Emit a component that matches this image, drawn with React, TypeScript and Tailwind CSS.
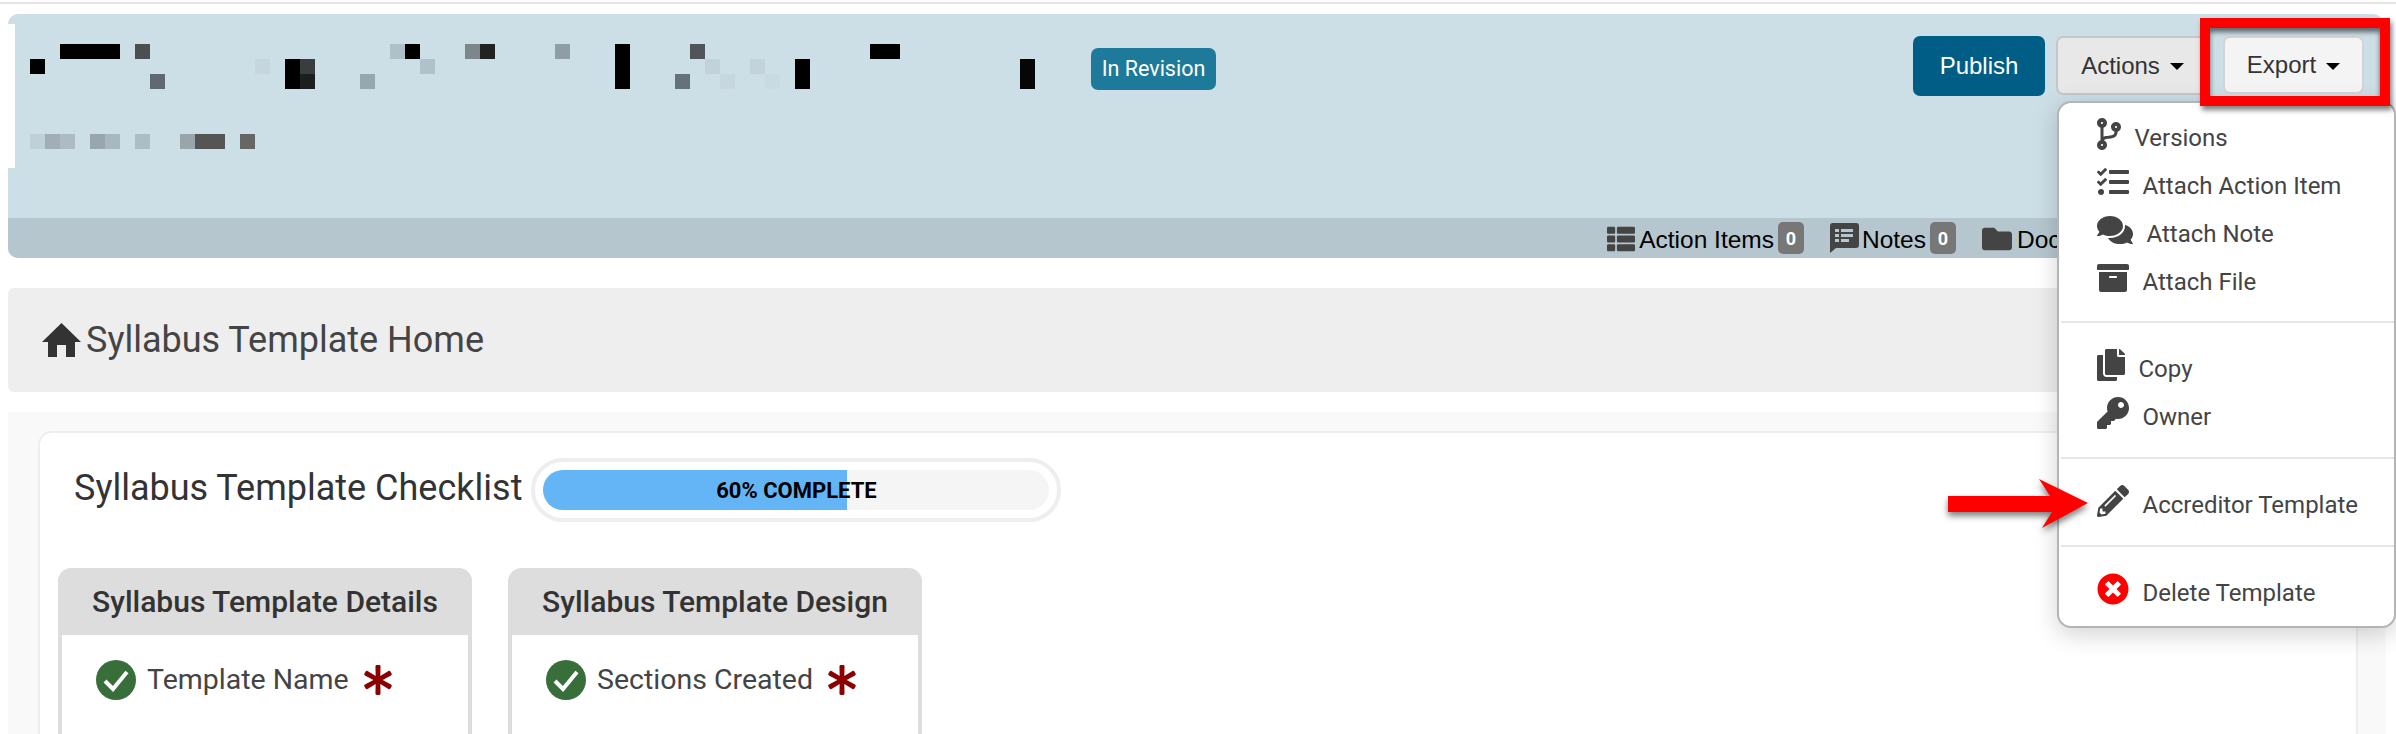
import {
  FaArchive,
  FaAsterisk,
  FaCodeBranch,
  FaComments,
  FaCopy,
  FaFolder,
  FaKey,
  FaPencilAlt,
  FaTasks,
  FaThList,
  FaTimesCircle,
} from "react-icons/fa";
import type { ReactNode } from "react";

// pixelated (redacted) title blocks: x, y, w, h, fill - relative to the svg
const blocks: [number, number, number, number, string][] = [
  [30, 0, 60, 15, "#000"],
  [105, 0, 15, 15, "#4a4f52"],
  [360, 0, 15, 15, "#afc0c8"],
  [375, 0, 15, 15, "#000"],
  [435, 0, 15, 15, "#7c868b"],
  [450, 0, 15, 15, "#222"],
  [525, 0, 15, 15, "#8f9ea6"],
  [585, 0, 15, 45, "#000"],
  [660, 0, 15, 15, "#4f5558"],
  [840, 0, 30, 15, "#000"],
  [0, 15, 15, 15, "#000"],
  [225, 15, 15, 15, "#c6d6de"],
  [255, 15, 15, 30, "#000"],
  [270, 15, 15, 15, "#3a3d3f"],
  [390, 15, 15, 15, "#b0c1c9"],
  [675, 15, 15, 15, "#c2d2da"],
  [720, 15, 15, 15, "#c3d3db"],
  [765, 15, 15, 30, "#000"],
  [990, 15, 15, 30, "#060606"],
  [120, 30, 15, 15, "#5e6a70"],
  [270, 30, 15, 15, "#1c1f20"],
  [330, 30, 15, 15, "#97a7af"],
  [645, 30, 15, 15, "#66727a"],
  [690, 30, 15, 15, "#c7d7df"],
  [735, 30, 15, 15, "#c9dae2"],
  [0, 90, 15, 15, "#c0d0d8"],
  [15, 90, 15, 15, "#a2aeb6"],
  [30, 90, 15, 15, "#adbcc4"],
  [60, 90, 15, 15, "#9aa6ad"],
  [75, 90, 15, 15, "#a8b8c0"],
  [105, 90, 15, 15, "#acbdc5"],
  [150, 90, 15, 15, "#9aa5ab"],
  [165, 90, 30, 15, "#555"],
  [210, 90, 15, 15, "#666"],
];

function Caret() {
  return <span className="ml-[10px] mt-[2px] h-0 w-0 border-x-[7px] border-t-[7px] border-x-transparent border-t-black" />;
}

function CountBadge({ children }: { children: ReactNode }) {
  return (
    <span className="ml-[4px] flex h-[32px] w-[26px] items-center justify-center rounded-[5px] bg-[#777] font-['Roboto',sans-serif] text-[18px] font-bold text-white">
      {children}
    </span>
  );
}

function NotesIcon() {
  return (
    <svg width="30" height="30" viewBox="0 0 30 30" className="shrink-0">
      <path d="M3 0h24a3 3 0 0 1 3 3v19a3 3 0 0 1-3 3H7l-6 5V3a3 3 0 0 1 2-3z" fill="#444" />
      <path d="M6 6h4v3H6zM12 6h12v3H12zM6 11h4v3H6zM12 11h12v3H12zM6 16h4v3H6zM12 16h8v3h-8z" fill="#b5c6ce" />
    </svg>
  );
}

function HomeIcon() {
  return (
    <svg width="39" height="34" viewBox="0 0 39 34" className="shrink-0">
      <path d="M19.5 0L39 19h-6v15h-9V22h-9v12H6V19H0z" fill="#333" />
    </svg>
  );
}

function CheckIcon() {
  return (
    <svg width="40" height="40" viewBox="0 0 40 40" className="shrink-0">
      <circle cx="20" cy="20" r="20" fill="#376e3a" />
      <path d="M9 21l8 8L31 12" fill="none" stroke="#fff" strokeWidth="4" />
    </svg>
  );
}

function MenuItem({ icon, label }: { icon: ReactNode; label: string }) {
  return (
    <div className="flex h-[48px] items-center gap-[13.5px] pl-[38px]">
      {icon}
      <span className="pt-[8px]">{label}</span>
    </div>
  );
}

function MenuDivider({ top, bottom }: { top: string; bottom: string }) {
  return <div className={`ml-[2px] h-[2px] bg-[#e5e5e5] ${top} ${bottom}`} />;
}

function ChecklistCard({ title, item }: { title: string; item: string }) {
  return (
    <div className="h-[220px] w-[414px] rounded-t-[14px] border-x-4 border-[#ddd]">
      <div className="-mx-1 flex h-[67px] items-center justify-center rounded-t-[14px] bg-[#ddd] text-[30px] font-medium text-[#333]">
        {title}
      </div>
      <div className="flex items-center pl-[34px] pt-[24px] text-[28.5px] text-[#444]">
        <CheckIcon />
        <span className="ml-[11px]">{item}</span>
        <FaAsterisk size={30} className="ml-[14px] text-[#8b0000]" />
      </div>
    </div>
  );
}

export default function App() {
  return (
    <div className="relative h-[734px] w-full overflow-hidden bg-white pt-[2px] font-['Roboto',sans-serif]">
      <div className="h-[2px] bg-[#e4e4e4]" />

      {/* record header */}
      <div className="relative ml-[8px] mr-[13px] mt-[10px] overflow-hidden rounded-[10px] bg-[#ccdee6]">
        <div className="absolute left-0 top-[10px] h-[144px] w-[7px] bg-white" />
        <div className="flex h-[204px] items-start justify-between pl-[22px] pr-[19px]">
          <div className="flex items-start gap-[56px] pt-[30px]">
            <svg width="1005" height="105" viewBox="0 0 1005 105" className="shrink-0">
              {blocks.map(([x, y, w, h, fill], i) => (
                <rect key={i} x={x} y={y} width={w} height={h} fill={fill} />
              ))}
            </svg>
            <span className="mt-[4px] flex h-[42px] w-[125px] items-center justify-center rounded-[7px] bg-[#1e7a9a] text-[21.5px] text-white">
              In Revision
            </span>
          </div>
          <div className="flex pt-[22px] font-['Liberation_Sans',sans-serif] text-[24px]">
            <button className="h-[60px] w-[132px] rounded-[7px] bg-[#005d85] text-white">Publish</button>
            <button className="ml-[11px] flex h-[59px] w-[153px] items-center justify-center rounded-[7px] border-2 border-[#c4c8ca] bg-[#e8e8e8] text-[#333]">
              Actions
              <Caret />
            </button>
            <button className="ml-[14px] flex h-[58px] w-[141px] items-center justify-center rounded-[7px] border-2 border-[#d4d4d4] bg-[#f4f4f4] text-[#333]">
              Export
              <Caret />
            </button>
          </div>
        </div>
        <div className="flex h-[40px] items-center justify-end bg-[#b5c6ce] pr-[326px] font-['Liberation_Sans',sans-serif] text-[24.5px] text-black">
          <FaThList size={28} className="mt-[2px] text-[#444]" />
          <span className="ml-[4px] pt-[4px]">Action Items</span>
          <CountBadge>0</CountBadge>
          <span className="ml-[25px]">
            <NotesIcon />
          </span>
          <span className="ml-[3px] pt-[4px]">Notes</span>
          <CountBadge>0</CountBadge>
          <FaFolder size={30} className="ml-[26px] mt-[2px] text-[#444]" />
          {/* the rest of this label sits under the open menu */}
          <span className="ml-[5px] w-[40px] overflow-hidden whitespace-nowrap pt-[4px]">Documents</span>
        </div>
      </div>

      {/* page title */}
      <div className="ml-[8px] mr-[13px] mt-[30px] flex h-[104px] items-center gap-[5px] rounded-[6px] bg-[#eee] pl-[34px] text-[36px] text-[#444]">
        <HomeIcon />
        Syllabus Template Home
      </div>

      {/* checklist panel */}
      <div className="ml-[8px] mr-[10px] mt-[20px] h-[322px] bg-[#f9f9f9] pl-[30px] pr-[28px] pt-[19px]">
        <div className="h-[400px] rounded-[14px] border-2 border-[#eee] bg-white pl-[18px] pt-[25px]">
          <div className="flex items-center pl-[16px]">
            <span className="mb-[4px] text-[36px] text-[#333]">Syllabus Template Checklist</span>
            <div className="ml-[9px] h-[64px] w-[530px] rounded-full border-4 border-[#eee] bg-white p-[8px]">
              <div className="relative h-full w-full overflow-hidden rounded-full bg-[#f5f5f5]">
                <div className="h-full w-[60%] bg-[#64b5f6]" />
                <span className="absolute inset-0 flex items-center justify-center text-[22px] font-bold text-black">
                  60% COMPLETE
                </span>
              </div>
            </div>
          </div>
          <div className="mt-[46px] flex gap-[36px]">
            <ChecklistCard title="Syllabus Template Details" item="Template Name" />
            <ChecklistCard title="Syllabus Template Design" item="Sections Created" />
          </div>
        </div>
      </div>

      {/* dropdown menu */}
      <div className="absolute left-[2057px] top-[101px] h-[527px] w-[339px] rounded-[14px] border-2 border-[#b4b4b4] bg-white pt-[7px] text-[24px] text-[#444] shadow-[0_6px_24px_rgba(0,0,0,0.18)]">
        <MenuItem icon={<FaCodeBranch size={32} className="w-[24px]" />} label="Versions" />
        <MenuItem icon={<FaTasks size={32} />} label="Attach Action Item" />
        <MenuItem icon={<FaComments size={32} className="w-[36px]" />} label="Attach Note" />
        <MenuItem icon={<FaArchive size={32} />} label="Attach File" />
        <MenuDivider top="mt-[19px]" bottom="mb-[18px]" />
        <MenuItem icon={<FaCopy size={32} className="w-[28px]" />} label="Copy" />
        <MenuItem icon={<FaKey size={32} />} label="Owner" />
        <MenuDivider top="mt-[20px]" bottom="mb-[18px]" />
        <MenuItem icon={<FaPencilAlt size={32} />} label="Accreditor Template" />
        <MenuDivider top="mt-[20px]" bottom="mb-[18px]" />
        <MenuItem icon={<FaTimesCircle size={32} className="text-[#f00]" />} label="Delete Template" />
      </div>

      {/* annotations */}
      <div className="absolute left-[2200px] top-[18px] h-[88px] w-[190px] border-[10px] border-[#f00] shadow-[2px_4px_5px_rgba(0,0,0,0.5),inset_0_4px_5px_rgba(0,0,0,0.55)]" />
      <svg
        width="150"
        height="60"
        viewBox="0 0 150 60"
        className="absolute left-[1948px] top-[479px] drop-shadow-[0_4px_3px_rgba(0,0,0,0.5)]"
      >
        <path d="M0 17H102L91 0L140 24L94 49L104 33H0z" fill="#f00" />
      </svg>
    </div>
  );
}
